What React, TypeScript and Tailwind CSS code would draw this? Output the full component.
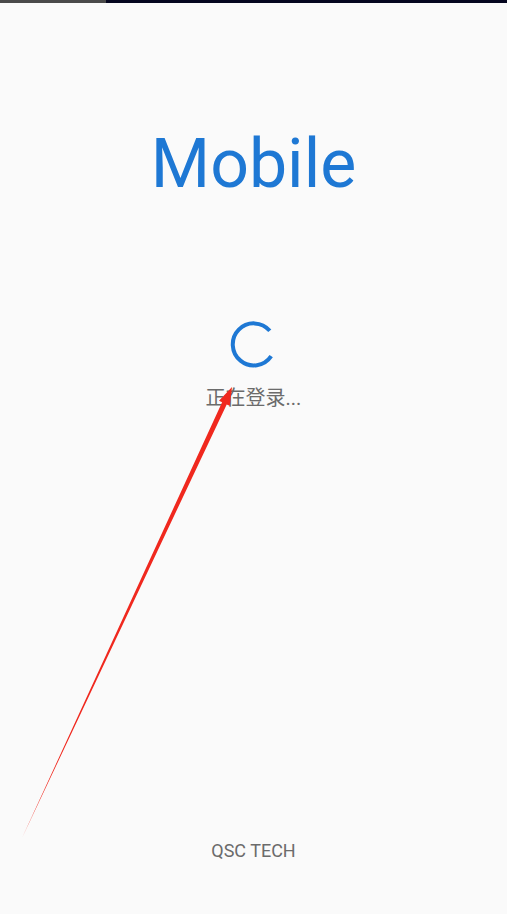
import React from 'react';

const Spinner: React.FC = () => (
  <svg width="50" height="50" viewBox="0 0 50 50">
    <path
      d="M40.8 11.8 A21 21 0 1 0 42.2 37.1"
      fill="none"
      stroke="#1e78d4"
      strokeWidth="4"
    />
  </svg>
);

const App: React.FC = () => {
  return (
    <div className="relative flex h-[914px] w-full flex-col items-center overflow-hidden bg-[#fafafa] font-['Roboto','Noto_Sans_CJK_SC',sans-serif]">
      {/* top strip */}
      <div className="flex h-[3px] w-full">
        <div className="w-[106px] bg-[#4a4a4a]" />
        <div className="flex-1 bg-[#05061f]" />
      </div>

      <h1 className="mt-[119px] text-[68px] leading-[84px] text-[#1e78d4]">Mobile</h1>

      <div className="mt-[113px]">
        <Spinner />
      </div>
      <p className="mt-[15px] text-[20px] leading-[28px] text-[#6b6b6b]">正在登录...</p>

      <div className="flex-1" />
      <p className="mb-[50px] text-[18px] leading-[26px] text-[#6b6b6b]">QSC TECH</p>

      {/* annotation arrow */}
      <svg className="pointer-events-none absolute left-0 top-0" width="507" height="914">
        <polygon
          points="232,387 229.8,405.8 226.7,404.4 22,838 222.1,402.2 219,400.8"
          fill="#f0281e"
        />
      </svg>
    </div>
  );
};

export default App;
